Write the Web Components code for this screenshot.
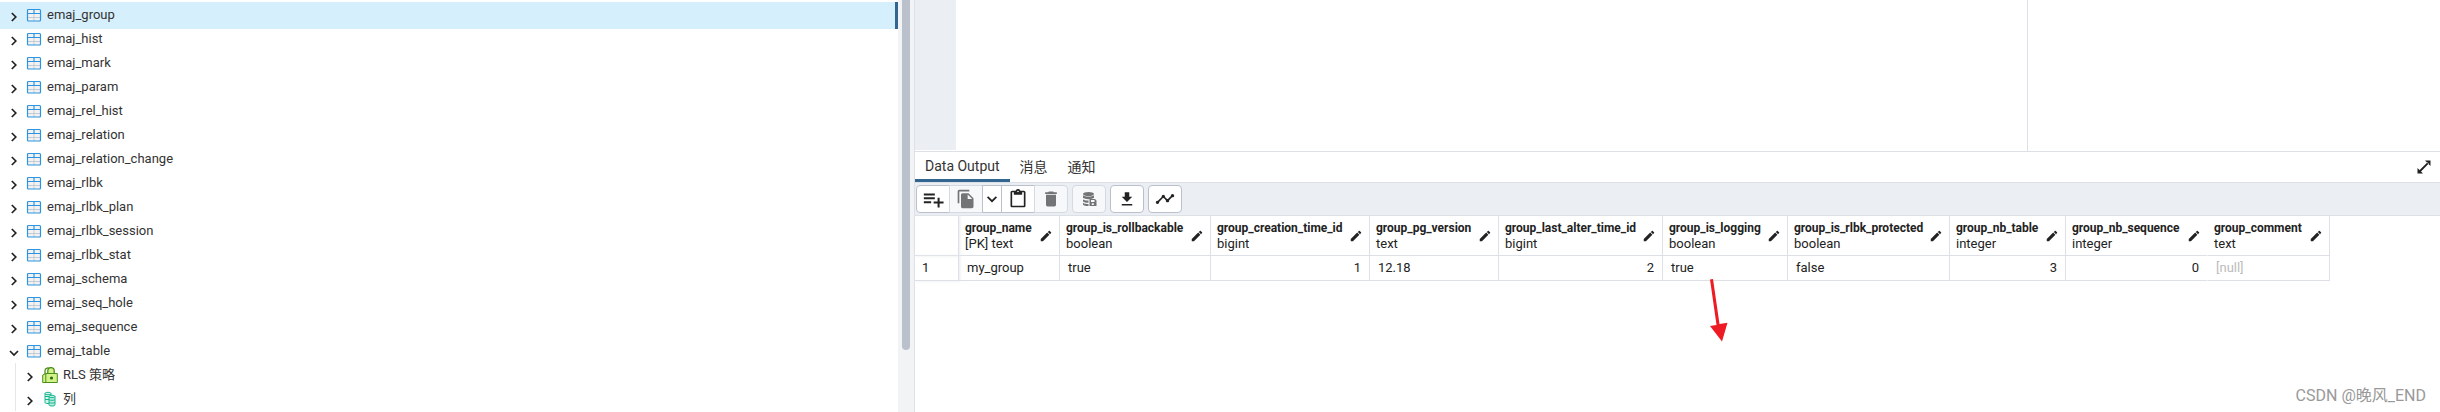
<!DOCTYPE html>
<html lang="zh-CN">
<head>
<meta charset="utf-8">
<title>Data Output</title>
<style>
    html, body {
        margin: 0;
        height: 100%;
    }

    body {
        --border: #dde0e6;
        --strong: #bac1cd;
        --grey: #ebeef3;
        --accent: #326690;
        font-family: Roboto, "Noto Sans CJK SC", sans-serif;
        font-size: 13px;
        color: #222;
        background: #fff;
        overflow: hidden;
    }
</style>
</head>
<body>
<pg-workspace></pg-workspace>

<script>
const ICONS = {
    right: [16, '<path d="M5.800 4l4 4-4 4" fill="none" stroke="#222" stroke-width="1.700"/>'],
    down: [16, '<path d="M4 6l4 4 4-4" fill="none" stroke="#222" stroke-width="1.700"/>'],
    table: [16, `<rect x="1.500" y="2.500" width="13" height="11.500" rx="1" fill="#f2f2f2"/>
        <path d="M2 10.500h12M8 7v7" stroke="#c5cbd3"/>
        <path d="M1.500 6.500h13M8 2.500v4" stroke="#2d95e0" stroke-width="1.200"/>
        <rect x="1.500" y="2.500" width="13" height="11.500" rx="1" fill="none" stroke="#2d95e0" stroke-width="1.200"/>`],
    policy: [16, `<path d="M3 7V3.600a2.600 2.600 0 015-1" fill="none" stroke="#4b8f1c" stroke-width="1.300"/>
        <path d="M5.800 7V3.800a3.200 3.200 0 016.400 0V7" fill="#d3f28a" stroke="#4b8f1c" stroke-width="1.300"/>
        <path d="M.7 8L4 6.500h11.300v9H.7z" fill="#d3f28a" stroke="#4b8f1c"/>
        <path d="M3.800 6.800v8.500" stroke="#4b8f1c"/><circle cx="9.500" cy="11" r="1.600" fill="#2e6d0c"/>`],
    column: [16, `<path d="M3 2.500c0-1.600 6-1.600 6 0v9c0 1.400-6 1.400-6 0z" fill="#d5f5ec" stroke="#19b591"/>
        <path d="M3 2.800c0 1.200 6 1.200 6 0M3 5.500h4M3 8.500h4" fill="none" stroke="#19b591"/>
        <path d="M7 5.500c0-1.600 6-1.600 6 0v8.300c0 1.600-6 1.600-6 0z" fill="#b8efdf" stroke="#19b591"/>
        <path d="M7 5.700c0 1.300 6 1.300 6 0M7 8.700c1 .8 5 .8 6 0M7 11.500c1 .8 5 .8 6 0" fill="none" stroke="#19b591"/>`],
    add: [24, '<path d="M2 6h12v2.200H2zM2 10.200h12v2.200H2zM2 14.400h8v2.200H2zM17 10.500h2.200v4.300h4.300V17h-4.300v4.300H17V17h-4.300v-2.200H17z"/>'],
    copy: [24, '<path d="M16 1H4C2.900 1 2 1.900 2 3v14h2V3h12V1zm-1 4l6 6v10c0 1.100-.9 2-2 2H8c-1.100 0-2-.9-2-2V7c0-1.100.9-2 2-2h7zm-1 7h5.500L14 6.500V12z"/>'],
    caret: [16, '<path d="M3.600 5.800L8 10.200l4.400-4.400" fill="none" stroke="#222" stroke-width="1.700"/>'],
    paste: [24, '<path d="M19 2h-4.180C14.400.84 13.300 0 12 0S9.600.84 9.180 2H5c-1.100 0-2 .9-2 2v16c0 1.100.9 2 2 2h14c1.100 0 2-.9 2-2V4c0-1.100-.9-2-2-2zm-7 0c.55 0 1 .45 1 1s-.45 1-1 1-1-.45-1-1 .45-1 1-1zm7 18H5V4h2v3h10V4h2v16z"/>'],
    trash: [24, '<path d="M6 19c0 1.100.9 2 2 2h8c1.100 0 2-.9 2-2V7H6v12zM19 4h-3.500l-1-1h-5l-1 1H5v2h14V4z"/>'],
    save: [16, `<ellipse cx="7.500" cy="3" rx="5.500" ry="2"/>
        <path d="M2 4.200c1.500 1.800 9.500 1.800 11 0v2.600c-1.500 1.800-9.500 1.800-11 0zM2 8.200c1.300 1.300 3.500 1.400 5.500 1.300v2.300c-2.200.1-4.200-.3-5.500-1.300zM2 11.700c1.300 1 3.300 1.300 5.500 1.300v2C5 15 2.600 14.700 2 13.500z"/>
        <path fill-rule="evenodd" d="M8.500 8H14l1.500 1.500V15h-7zM10 9v2h3.500V9zM10.800 12.200v1.800h2v-1.800z"/>`],
    download: [24, '<path d="M19 9h-4V3H9v6H5l7 7 7-7zM5 18.500v2.200h14v-2.200z"/>'],
    graph: [24, '<path d="M23 8c0 1.100-.9 2-2 2-.18 0-.35-.02-.51-.07l-3.560 3.550c.05.16.07.34.07.52 0 1.100-.9 2-2 2s-2-.9-2-2c0-.18.02-.36.07-.52l-2.550-2.550c-.16.05-.34.07-.52.07s-.36-.02-.52-.07l-4.550 4.560c.05.16.07.33.07.51 0 1.100-.9 2-2 2s-2-.9-2-2 .9-2 2-2c.18 0 .35.02.51.07l4.560-4.550C8.020 9.360 8 9.180 8 9c0-1.100.9-2 2-2s2 .9 2 2c0 .18-.02.36-.07.52l2.550 2.550c.16-.05.34-.07.52-.07s.36.02.52.07l3.550-3.560C19.020 8.350 19 8.180 19 8c0-1.100.9-2 2-2s2 .9 2 2z"/>'],
    edit: [24, '<path d="M3 17.250V21h3.750L17.810 9.940l-3.750-3.750L3 17.250zM20.710 7.040c.39-.39.39-1.020 0-1.410l-2.340-2.340c-.39-.39-1.020-.39-1.410 0l-1.830 1.830 3.750 3.750 1.830-1.830z"/>'],
    expand: [16, '<path d="M9 1.500h5.500V7zM1.500 9v5.500H7zM3.200 11.600l1.300 1.300 8.300-8.400-1.300-1.300z"/>']
};

const TABLES = [
    'emaj_group', 'emaj_hist', 'emaj_mark', 'emaj_param', 'emaj_rel_hist',
    'emaj_relation', 'emaj_relation_change', 'emaj_rlbk', 'emaj_rlbk_plan',
    'emaj_rlbk_session', 'emaj_rlbk_stat', 'emaj_schema', 'emaj_seq_hole',
    'emaj_sequence', 'emaj_table'
];

const COLUMNS = [
    {name: 'group_name', type: '[PK] text', value: 'my_group', width: 101},
    {name: 'group_is_rollbackable', type: 'boolean', value: 'true', width: 151},
    {name: 'group_creation_time_id', type: 'bigint', value: '1', width: 159, number: true},
    {name: 'group_pg_version', type: 'text', value: '12.18', width: 129},
    {name: 'group_last_alter_time_id', type: 'bigint', value: '2', width: 164, number: true},
    {name: 'group_is_logging', type: 'boolean', value: 'true', width: 125},
    {name: 'group_is_rlbk_protected', type: 'boolean', value: 'false', width: 162},
    {name: 'group_nb_table', type: 'integer', value: '3', width: 116, number: true},
    {name: 'group_nb_sequence', type: 'integer', value: '0', width: 142, number: true, open: true},
    {name: 'group_comment', type: 'text', value: '[null]', width: 122, empty: true}
];

class PgIcon extends HTMLElement {
    constructor () {
        super();
        this.attachShadow({mode: 'open'});
    }

    connectedCallback () {
        const size = parseInt(this.getAttribute('size'), 10) || 16;
        const [box, shapes] = ICONS[this.getAttribute('name')];
        this.shadowRoot.innerHTML = `<style>
            :host { display: block; flex: none; width: ${size}px; height: ${size}px; }
            svg { display: block; }
        </style>
        <svg width="${size}" height="${size}" viewBox="0 0 ${box} ${box}" fill="currentColor" aria-hidden="true">${shapes}</svg>`;
    }
}

class PgTreeItem extends HTMLElement {
    constructor () {
        super();
        this.attachShadow({mode: 'open'});
    }

    connectedCallback () {
        const open = this.hasAttribute('open');
        this.setAttribute('role', 'treeitem');
        this.shadowRoot.innerHTML = `<style>
            :host { display: block; }
            .row {
                display: flex;
                align-items: center;
                height: 24px;
                padding-left: 6px;
            }
            /* la selection deborde un peu sur les lignes voisines */
            :host([selected]) .row {
                margin: -1px 0 -2px;
                padding-top: 1px;
                padding-bottom: 2px;
                background: #d6effc;
                border-right: 3px solid var(--accent);
            }
            button {
                padding: 3px 0 0;
                border: 0;
                background: none;
            }
            .icon { margin: 0 5px 0 4px; }
            .label { line-height: 24px; color: #333; }
            .children {
                margin-left: 15px;
                border-left: 1px solid #e4e6ea;
            }
        </style>
        <div class="row">
            <button type="button" aria-label="${open ? 'Collapse' : 'Expand'}"><pg-icon name="${open ? 'down' : 'right'}"></pg-icon></button>
            <pg-icon class="icon" name="${this.getAttribute('icon')}"></pg-icon>
            <span class="label">${this.getAttribute('label')}</span>
        </div>
        ${open ? '<div class="children" role="group"><slot></slot></div>' : ''}`;
    }
}

class PgTree extends HTMLElement {
    constructor () {
        super();
        this.attachShadow({mode: 'open'}).innerHTML = `<style>
            :host {
                display: flex;
                box-sizing: border-box;
                border-right: 1px solid var(--border);
            }
            .list { flex: 1; padding-top: 3px; }
            .track {
                width: 8px;
                padding: 0 4px;
                background: #f1f3f5;
            }
            .thumb {
                height: 85%;
                border-radius: 0 0 4px 4px;
                background: var(--strong);
            }
        </style>
        <div class="list" role="tree">${this.buildItems()}</div>
        <div class="track"><div class="thumb"></div></div>`;
    }

    buildItems () {
        return TABLES.map((label, i) => {
            const last = i === TABLES.length - 1;
            const children = last ? `
                <pg-tree-item icon="policy" label="RLS 策略"></pg-tree-item>
                <pg-tree-item icon="column" label="列"></pg-tree-item>` : '';
            return `<pg-tree-item icon="table" label="${label}" ${i === 0 ? 'selected' : ''} ${last ? 'open' : ''}>${children}</pg-tree-item>`;
        }).join('');
    }
}

class PgEditor extends HTMLElement {
    constructor () {
        super();
        this.attachShadow({mode: 'open'}).innerHTML = `<style>
            :host {
                display: flex;
                height: 151px;
                border-bottom: 1px solid var(--border);
            }
            .gutter { width: 41px; margin-bottom: 1px; background: var(--grey); }
            .page { width: 1071px; border-right: 1px solid var(--border); }
        </style>
        <div class="gutter"></div>
        <div class="page"></div>`;
    }
}

class PgTabs extends HTMLElement {
    constructor () {
        super();
        this.attachShadow({mode: 'open'}).innerHTML = `<style>
            :host {
                display: flex;
                height: 30px;
                border-bottom: 1px solid var(--border);
            }
            button {
                padding: 1px 10px 0;
                border: 0;
                border-bottom: 3px solid transparent;
                background: none;
                font: inherit;
                font-size: 14px;
                color: #333;
            }
            .active { border-color: var(--accent); }
            .expand {
                margin-left: auto;
                padding: 2px 8px 0;
                color: #222;
            }
        </style>
        <button type="button" class="active">Data Output</button>
        <button type="button">消息</button>
        <button type="button">通知</button>
        <button type="button" class="expand" aria-label="Maximize"><pg-icon name="expand"></pg-icon></button>`;
    }
}

class PgToolbar extends HTMLElement {
    constructor () {
        super();
        this.attachShadow({mode: 'open'}).innerHTML = `<style>
            :host {
                display: flex;
                gap: 4px;
                padding: 2px 1px;
                background: var(--grey);
                border-bottom: 1px solid var(--border);
            }
            .group { display: flex; }
            button {
                display: flex;
                align-items: center;
                justify-content: center;
                box-sizing: border-box;
                width: 34px;
                height: 28px;
                padding: 0;
                border: 1px solid var(--strong);
                background: #fff;
                color: #222;
            }
            button + button { margin-left: -1px; }
            button:first-child { border-radius: 4px 0 0 4px; }
            button:last-child { border-radius: 0 4px 4px 0; }
            button:only-child { border-radius: 4px; }
            button:disabled {
                border-color: #d5dae2;
                background: #f6f8fa;
                color: #727476;
            }
            .narrow { width: 20px; }
        </style>
        <div class="group">
            ${this.buildButton('add', 'Add row', 22)}
            ${this.buildButton('copy', 'Copy', 20, 'disabled')}
            ${this.buildButton('caret', 'Copy options', 16, 'class="narrow"')}
            ${this.buildButton('paste', 'Paste', 20)}
            ${this.buildButton('trash', 'Delete', 20, 'disabled')}
        </div>
        <div class="group">${this.buildButton('save', 'Save data changes', 16, 'disabled')}</div>
        <div class="group">${this.buildButton('download', 'Download', 18)}</div>
        <div class="group">${this.buildButton('graph', 'Graph', 20)}</div>`;
    }

    buildButton (icon, label, size, extra = '') {
        return `<button type="button" aria-label="${label}" ${extra}><pg-icon name="${icon}" size="${size}"></pg-icon></button>`;
    }
}

class PgGrid extends HTMLElement {
    constructor () {
        super();
        const total = COLUMNS.reduce((sum, c) => sum + c.width, 44);
        this.attachShadow({mode: 'open'}).innerHTML = `<style>
            :host { display: block; }
            table {
                width: ${total}px;
                table-layout: fixed;
                border-collapse: separate;
                border-spacing: 0;
            }
            th, td {
                box-sizing: border-box;
                border-right: 1px solid var(--border);
                border-bottom: 1px solid var(--border);
                text-align: left;
                font-weight: 400;
                white-space: nowrap;
            }
            th { height: 40px; padding: 0 6px; }
            td { height: 25px; padding: 0 8px; line-height: 22px; }
            .index { padding: 0 7px; box-shadow: 1px 0 3px #e8eaee; }
            .head {
                display: flex;
                align-items: center;
                justify-content: space-between;
                line-height: 16px;
            }
            strong { display: block; font-size: 12px; font-weight: 700; }
            .number { text-align: right; }
            .open { border-right-color: transparent; }
            .empty { color: #bbb; }
        </style>
        <table>
            <colgroup><col style="width: 44px">${COLUMNS.map(c => `<col style="width: ${c.width}px">`).join('')}</colgroup>
            <thead><tr><th class="index"></th>${COLUMNS.map(c => this.buildHead(c)).join('')}</tr></thead>
            <tbody><tr><td class="index">1</td>${COLUMNS.map(c => this.buildCell(c)).join('')}</tr></tbody>
        </table>`;
    }

    buildHead (c) {
        return `<th scope="col" class="${c.open ? 'open' : ''}"><div class="head">
            <span><strong>${c.name}</strong>${c.type}</span>
            <pg-icon name="edit" size="14"></pg-icon>
        </div></th>`;
    }

    buildCell (c) {
        return `<td class="${c.number ? 'number' : ''} ${c.open ? 'open' : ''} ${c.empty ? 'empty' : ''}">${c.value}</td>`;
    }
}

// fleche rouge et signature posees par dessus la page
class PgNotes extends HTMLElement {
    constructor () {
        super();
        this.attachShadow({mode: 'open'}).innerHTML = `<style>
            :host { display: contents; }
            svg { position: absolute; left: 1708px; top: 278px; }
            span {
                position: absolute;
                right: 14px;
                bottom: 6px;
                font-size: 16px;
                line-height: 20px;
                color: #999;
            }
        </style>
        <svg width="22" height="66" viewBox="0 0 22 66" fill="#ed1c24" aria-hidden="true">
            <path d="M2 1.500L5 1l6.500 45 8-1.300L14 63.500 2 48l6.500-1z"/>
        </svg>
        <span>CSDN @晚风_END</span>`;
    }
}

class PgWorkspace extends HTMLElement {
    constructor () {
        super();
        this.attachShadow({mode: 'open'}).innerHTML = `<style>
            :host {
                display: flex;
                position: relative;
                min-height: 100vh;
            }
            pg-tree { flex: 0 0 37.5%; }
            main { flex: 1; min-width: 0; }
        </style>
        <pg-tree></pg-tree>
        <main>
            <pg-editor></pg-editor>
            <pg-tabs></pg-tabs>
            <pg-toolbar></pg-toolbar>
            <pg-grid></pg-grid>
        </main>
        <pg-notes></pg-notes>`;
    }
}

customElements.define('pg-icon', PgIcon);
customElements.define('pg-tree-item', PgTreeItem);
customElements.define('pg-tree', PgTree);
customElements.define('pg-editor', PgEditor);
customElements.define('pg-tabs', PgTabs);
customElements.define('pg-toolbar', PgToolbar);
customElements.define('pg-grid', PgGrid);
customElements.define('pg-notes', PgNotes);
customElements.define('pg-workspace', PgWorkspace);
</script>
</body>
</html>
